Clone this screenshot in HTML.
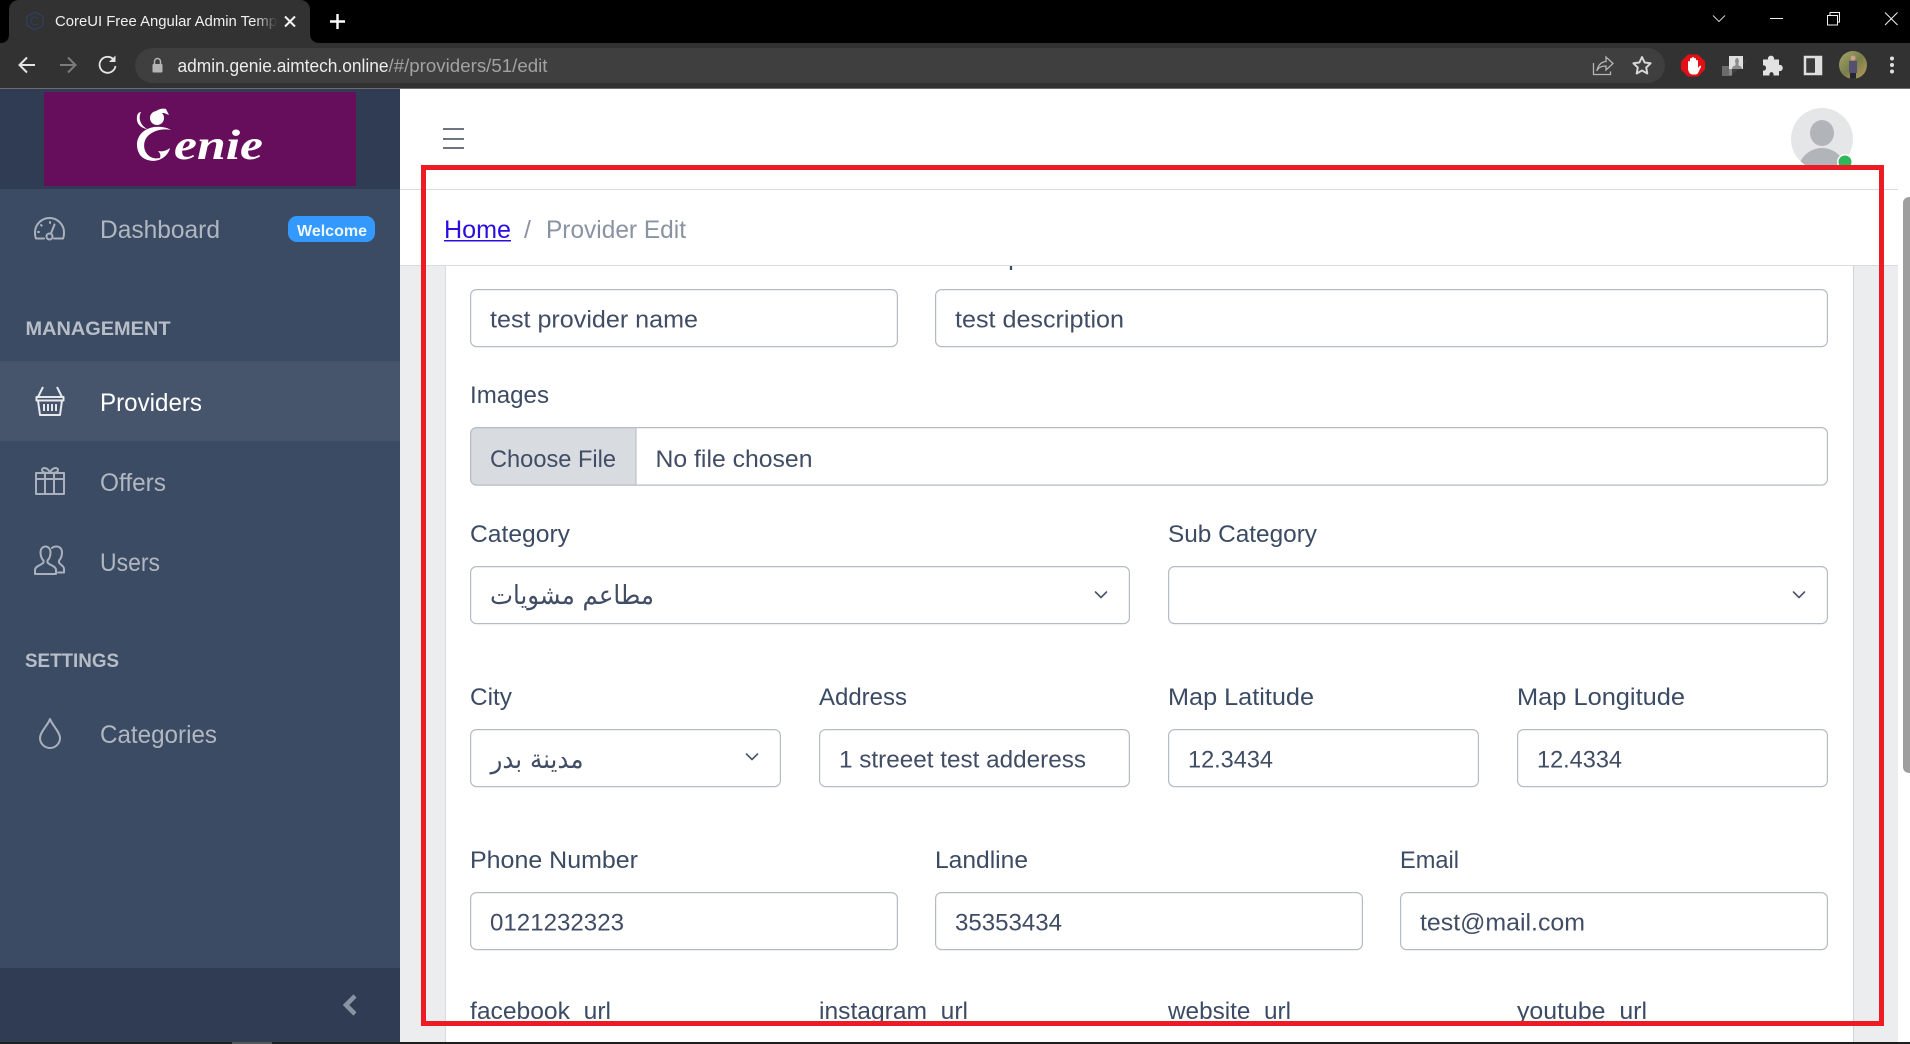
<!DOCTYPE html>
<html><head><meta charset="utf-8"><title>Provider Edit</title>
<style>
html,body{margin:0;padding:0;width:1910px;height:1044px;overflow:hidden;background:#fff}
svg{display:block}
text{font-family:"Liberation Sans",sans-serif;white-space:pre}
.l{font-size:24px;fill:#3c4b64}
.v{font-size:24px;fill:#404d65}
.n{font-size:25px;fill:#b1b7c1}
.h{font-size:19.5px;font-weight:bold;fill:#b8bec8}
.a{font-family:"DejaVu Sans",sans-serif;font-size:26px;fill:#404d65}
.b{fill:#fff;stroke:#b5bac5;stroke-width:1.2}
.i{fill:none;stroke:#aab1bc;stroke-width:2;stroke-linejoin:round;stroke-linecap:round}
.c{fill:none;stroke:#4a566c;stroke-width:1.6;stroke-linecap:round;stroke-linejoin:round}
</style></head><body>
<svg width="1910" height="1044" viewBox="0 0 1910 1044" xmlns="http://www.w3.org/2000/svg">
<defs>
<linearGradient id="fade" x1="0" x2="1"><stop offset="0" stop-color="#323232" stop-opacity="0"/><stop offset="1" stop-color="#323232"/></linearGradient>
<linearGradient id="ava" x1="0" x2="1" y1="0" y2="1"><stop offset="0" stop-color="#a9a56e"/><stop offset=".5" stop-color="#7a7f4c"/><stop offset="1" stop-color="#b89a5c"/></linearGradient>
<clipPath id="av1"><circle cx="1822" cy="139" r="31"/></clipPath>
<clipPath id="av2"><circle cx="1853" cy="65" r="14"/></clipPath>
</defs>

<!-- browser chrome -->
<rect width="1910" height="43" fill="#000"/>
<rect y="43" width="1910" height="45" fill="#323232"/>
<rect y="88" width="1910" height="1" fill="#6e6e6e"/>
<path d="M0 43C6 43 9 40 9 34V10C9 4 13 0 19 0H300C306 0 310 4 310 10V34C310 40 314 43 320 43Z" fill="#323232"/>
<path d="M35 12l8 4.500v9l-8 4.500-8-4.500v-9z" fill="none" stroke="#2f3d55" stroke-width="1.600"/>
<path d="M38 18.500a4 4 0 1 0 0 5" fill="none" stroke="#2f3d55" stroke-width="1.400"/>
<text x="55" y="26" font-size="14.500" fill="#f0f0f0" textLength="222" lengthAdjust="spacingAndGlyphs">CoreUI Free Angular Admin Temp</text>
<rect x="255" y="8" width="22" height="26" fill="url(#fade)"/>
<path d="M285 16.500l10 10M295 16.500l-10 10" stroke="#f2f2f2" stroke-width="2" fill="none"/>
<path d="M337.500 14v15M330 21.500h15" stroke="#fff" stroke-width="2.400" fill="none"/>
<path d="M35 65H20M27 57.500l-7.500 7.500 7.500 7.500" fill="none" stroke="#e4e4e4" stroke-width="2"/>
<path d="M75 65H60M68 57.500l7.500 7.500-7.500 7.500" fill="none" stroke="#7b7b7b" stroke-width="2"/>
<path d="M114 60a8 8 0 1 0 1.500 6" fill="none" stroke="#e4e4e4" stroke-width="1.800"/>
<path d="M115.500 55.500v6.500h-6.500z" fill="#e4e4e4"/>
<rect x="135" y="48" width="1530" height="35" rx="17.500" fill="#3f3f3f"/>
<rect x="152.500" y="64" width="10" height="8.500" rx="1" fill="#b5b5b5"/>
<path d="M154.500 64v-2.500a3 3 0 0 1 6 0V64" fill="none" stroke="#b5b5b5" stroke-width="1.500"/>
<text x="177.500" y="72" font-size="18" fill="#ececec" textLength="211" lengthAdjust="spacingAndGlyphs">admin.genie.aimtech.online</text>
<text x="388.500" y="72" font-size="18" fill="#a2a2a2" textLength="159" lengthAdjust="spacingAndGlyphs">/#/providers/51/edit</text>
<path d="M1593.500 63v11.500h17v-3M1597 71c1-6 4-9 9-9.500V57l7 6.500-7 6.500v-4c-4 0-7 1-9 4z" fill="none" stroke="#b5b5b5" stroke-width="1.300"/>
<path d="M1642 57l2.600 5.500 6 .8-4.400 4.200 1.100 6-5.300-3-5.300 3 1.100-6-4.400-4.200 6-.8z" fill="none" stroke="#d6d6d6" stroke-width="2" stroke-linejoin="round"/>
<path d="M1688 55h10l7 7v8l-7 7h-10l-7-7v-8z" fill="#e40f15" transform="translate(0 -.5)"/>
<path d="M1688 70v-8a1 1 0 0 1 2 0v-3a1 1 0 0 1 2 0v-1a1 1 0 0 1 2 0v1a1 1 0 0 1 2 0v2a1 1 0 0 1 2 0v7l1.500-2c1-1 2 0 1.500 1l-3 6c-.5 1-1.500 1.500-3 1.500h-2.500c-2 0-4-2-4-4z" fill="#fff"/>
<rect x="1722" y="66" width="10" height="10" fill="#6b6b6b"/>
<rect x="1729" y="66" width="3" height="9" fill="#8a8a8a"/>
<path d="M1732 66l8-3 8-4-8 9-8 7z" fill="#3f3f3f"/>
<rect x="1729" y="56" width="14" height="13" fill="#dedede"/>
<path d="M1732 69c0-3 3-3 3.500-4v-2c-1-2 0-5 1.500-5s2.500 3 1.500 5v2c.5 1 3.500 1 3.500 4z" fill="#8d8d8d"/>
<path d="M1764 61h5c-1-5 7-5 6 0h5v5.500c5-1 5 7 0 6V77h-5.500c1-4.500-5-4.500-4 0H1764v-5c4 1 4-6 0-5z" fill="#e2e2e2" transform="translate(-1 -1.500)"/>
<rect x="1805" y="57" width="16" height="17" fill="#3a3a3a" stroke="#dedede" stroke-width="2.500"/>
<rect x="1815" y="56" width="6" height="18" fill="#dedede"/>
<circle cx="1853" cy="65" r="14" fill="url(#ava)"/>
<g clip-path="url(#av2)"><circle cx="1853" cy="58" r="2.500" fill="#caa286"/><rect x="1849" y="61" width="8" height="12" fill="#565070"/><rect x="1850" y="73" width="6" height="7" fill="#26262e"/></g>
<circle cx="1892" cy="58.500" r="2" fill="#e0e0e0"/><circle cx="1892" cy="65" r="2" fill="#e0e0e0"/><circle cx="1892" cy="71.500" r="2" fill="#e0e0e0"/>
<path d="M1713 15.500l6 6 6-6" fill="none" stroke="#cfcfcf" stroke-width="1"/>
<rect x="1770" y="18" width="13" height="1" fill="#f0f0f0"/>
<rect x="1827.500" y="15.500" width="10" height="9.500" fill="none" stroke="#f0f0f0" stroke-width="1"/>
<path d="M1830 15v-2.500h9.500V22H1838" fill="none" stroke="#f0f0f0" stroke-width="1"/>
<path d="M1885 12.500l12.500 12.500M1897.500 12.500L1885 25" stroke="#f0f0f0" stroke-width="1" fill="none"/>

<!-- main area -->
<rect x="400" y="89" width="1510" height="953" fill="#ebedef"/>
<rect x="1898" y="89" width="12" height="953" fill="#fff"/>
<rect x="445" y="189" width="1408" height="853" fill="#fff"/>
<rect x="445" y="189" width="1" height="853" fill="#d8dbe0"/>
<rect x="1853" y="189" width="1" height="853" fill="#d0d3d8"/>

<!-- form -->
<text class="l" x="935" y="265" textLength="129" lengthAdjust="spacingAndGlyphs">Description</text>
<rect class="b" x="470.600" y="289.600" width="426.800" height="57" rx="6"/>
<text class="v" x="490" y="327.500" textLength="208" lengthAdjust="spacingAndGlyphs">test provider name</text>
<rect class="b" x="935.600" y="289.600" width="891.800" height="57" rx="6"/>
<text class="v" x="955" y="327.500" textLength="169" lengthAdjust="spacingAndGlyphs">test description</text>

<text class="l" x="470" y="403" textLength="79" lengthAdjust="spacingAndGlyphs">Images</text>
<path d="M636 427.600H476.600a6 6 0 0 0-6 6V479a6 6 0 0 0 6 6H636z" fill="#d8dbe0"/>
<rect x="470.600" y="427.600" width="1356.800" height="57.500" rx="6" fill="none" stroke="#b5bac5" stroke-width="1.200"/>
<rect x="635.500" y="428" width="1" height="57" fill="#b5bac5"/>
<text class="v" x="490" y="467" textLength="126" lengthAdjust="spacingAndGlyphs">Choose File</text>
<text class="v" x="655.500" y="467" textLength="157" lengthAdjust="spacingAndGlyphs">No file chosen</text>

<text class="l" x="470" y="542" textLength="100" lengthAdjust="spacingAndGlyphs">Category</text>
<text class="l" x="1168" y="542" textLength="149" lengthAdjust="spacingAndGlyphs">Sub Category</text>
<rect class="b" x="470.600" y="566.600" width="658.800" height="57" rx="6"/>
<text class="a" x="490" y="604" textLength="164" lengthAdjust="spacingAndGlyphs">مطاعم مشويات</text>
<path class="c" d="M1095.500 592l5.500 5.500 5.500-5.500"/>
<rect class="b" x="1168.600" y="566.600" width="658.800" height="57" rx="6"/>
<path class="c" d="M1793.500 592l5.500 5.500 5.500-5.500"/>

<text class="l" x="470" y="705" textLength="42" lengthAdjust="spacingAndGlyphs">City</text>
<text class="l" x="819" y="705" textLength="88" lengthAdjust="spacingAndGlyphs">Address</text>
<text class="l" x="1168" y="705" textLength="146" lengthAdjust="spacingAndGlyphs">Map Latitude</text>
<text class="l" x="1517" y="705" textLength="168" lengthAdjust="spacingAndGlyphs">Map Longitude</text>
<rect class="b" x="470.600" y="729.600" width="309.800" height="57" rx="6"/>
<text class="a" x="490.500" y="768" textLength="93" lengthAdjust="spacingAndGlyphs">مدينة بدر</text>
<path class="c" d="M746.500 754l5.500 5.500 5.500-5.500"/>
<rect class="b" x="819.600" y="729.600" width="309.800" height="57" rx="6"/>
<text class="v" x="839" y="767.500" textLength="247" lengthAdjust="spacingAndGlyphs">1 streeet test adderess</text>
<rect class="b" x="1168.600" y="729.600" width="309.800" height="57" rx="6"/>
<text class="v" x="1188" y="767.500" textLength="85" lengthAdjust="spacingAndGlyphs">12.3434</text>
<rect class="b" x="1517.600" y="729.600" width="309.800" height="57" rx="6"/>
<text class="v" x="1537" y="767.500" textLength="85" lengthAdjust="spacingAndGlyphs">12.4334</text>

<text class="l" x="470" y="868" textLength="168" lengthAdjust="spacingAndGlyphs">Phone Number</text>
<text class="l" x="935" y="868" textLength="93" lengthAdjust="spacingAndGlyphs">Landline</text>
<text class="l" x="1400" y="868" textLength="59" lengthAdjust="spacingAndGlyphs">Email</text>
<rect class="b" x="470.600" y="892.600" width="426.800" height="57" rx="6"/>
<text class="v" x="490" y="930.500" textLength="134" lengthAdjust="spacingAndGlyphs">0121232323</text>
<rect class="b" x="935.600" y="892.600" width="426.800" height="57" rx="6"/>
<text class="v" x="955" y="930.500" textLength="107" lengthAdjust="spacingAndGlyphs">35353434</text>
<rect class="b" x="1400.600" y="892.600" width="426.800" height="57" rx="6"/>
<text class="v" x="1420" y="930.500" textLength="165" lengthAdjust="spacingAndGlyphs">test@mail.com</text>

<text class="l" x="470" y="1019" textLength="141" lengthAdjust="spacingAndGlyphs">facebook_url</text>
<text class="l" x="819" y="1019" textLength="149" lengthAdjust="spacingAndGlyphs">instagram_url</text>
<text class="l" x="1168" y="1019" textLength="123" lengthAdjust="spacingAndGlyphs">website_url</text>
<text class="l" x="1517" y="1019" textLength="130" lengthAdjust="spacingAndGlyphs">youtube_url</text>

<!-- header + breadcrumb -->
<rect x="400" y="89" width="1498" height="100" fill="#fff"/>
<rect x="400" y="189" width="1498" height="1" fill="#d8dbe0"/>
<rect x="400" y="190" width="1498" height="75" fill="#fff"/>
<rect x="400" y="265" width="1498" height="1" fill="#d8dbe0"/>
<rect x="443" y="128" width="21" height="2" fill="#6d7585"/>
<rect x="443" y="138" width="21" height="2" fill="#6d7585"/>
<rect x="443" y="147" width="21" height="2" fill="#6d7585"/>
<circle cx="1822" cy="139" r="31" fill="#e4e6e8"/>
<g clip-path="url(#av1)"><ellipse cx="1822" cy="133" rx="12" ry="13" fill="#b1b5b9"/><ellipse cx="1822" cy="172" rx="24" ry="24" fill="#b1b5b9"/></g>
<circle cx="1845" cy="162" r="8" fill="#fff"/>
<circle cx="1845" cy="162" r="6.500" fill="#2eb85c"/>
<text x="444" y="238" font-size="25" fill="#2a0ee0" textLength="67" lengthAdjust="spacingAndGlyphs">Home</text>
<rect x="444" y="240" width="67" height="1.500" fill="#2a0ee0"/>
<text x="524" y="238" font-size="25" fill="#8a93a2">/</text>
<text x="546" y="238" font-size="25" fill="#8a93a2" textLength="140" lengthAdjust="spacingAndGlyphs">Provider Edit</text>

<!-- scrollbar -->
<path d="M1903 203a6 6 0 0 1 6-6h1v576h-1a6 6 0 0 1-6-6z" fill="#9e9e9e"/>

<!-- sidebar -->
<rect x="0" y="189" width="400" height="853" fill="#3c4b64"/>
<rect x="0" y="89" width="400" height="100" fill="#303c54"/>
<rect x="0" y="968" width="400" height="74" fill="#303c54"/>
<rect x="44" y="92" width="312" height="94" fill="#660e5c"/>
<!-- logo -->
<circle cx="157" cy="118" r="7" fill="#fff"/>
<path d="M141 112c-3 6-1 13 6 17-7-1-11-6-10-12 0-3 2-5 4-5z" fill="#fff"/>
<path d="M156 111c3-2 7-3 10-2l3 6-5-2c-3 0-6 0-8-2z" fill="#fff"/>
<path d="M171 130c-6-4-19-5-27 1-8 6-9 16-4 24 4 5 13 8 21 4 4-2 8-6 9-11-4 3-8 4-12 3 2 2 3 4 2 7-5 1-9 0-12-3-5-5-5-13-1-18 5-6 15-9 24-7z" fill="#fff"/>
<text x="174" y="159" font-size="42" font-style="italic" font-weight="bold" fill="#fff" textLength="89" lengthAdjust="spacingAndGlyphs" style="font-family:'Liberation Serif',serif">enie</text>

<!-- nav -->
<rect x="0" y="361" width="400" height="80" fill="#46546c"/>
<path class="i" d="M36 238.500c-1-2-1-4-1-6a14.500 14.500 0 0 1 29 0c0 2 0 4-1 6h-9M36 238.500h8"/>
<circle class="i" cx="49.500" cy="236.500" r="3"/>
<path class="i" d="M51 233.500l3.500-9M50 222v1M41 225l.7.7M38 232h1"/>
<text class="n" x="100" y="238" textLength="120" lengthAdjust="spacingAndGlyphs">Dashboard</text>
<rect x="288" y="216" width="87" height="26" rx="9" fill="#39f"/>
<text x="297" y="236" font-size="16" font-weight="bold" fill="#eef6ff" textLength="70" lengthAdjust="spacingAndGlyphs">Welcome</text>

<text class="h" x="25.500" y="335" textLength="145" lengthAdjust="spacingAndGlyphs">MANAGEMENT</text>
<path d="M36.500 397h27v3.500h-27zM38 400.500l2 14.500h20l2-14.500M43 387l-5 10M57 387l5 10M44 404v7M48 404v7M52 404v7M56 404v7" fill="none" stroke="#e6e8ec" stroke-width="2" stroke-linejoin="round"/>
<text x="100" y="411" font-size="25" fill="#fff" textLength="102" lengthAdjust="spacingAndGlyphs">Providers</text>

<path class="i" d="M36 473h28v6H36zM36 479h28v15H36zM45 473v21M54 473v21M50 473c-2-6-8-6-8-3 0 2 3 3 8 3zM50 473c2-6 8-6 8-3 0 2-3 3-8 3z" stroke-width="1.800"/>
<text class="n" x="100" y="491" textLength="66" lengthAdjust="spacingAndGlyphs">Offers</text>

<path class="i" d="M35 574v-4c0-4 7-5 8.500-7.500v-2c-2-2-3-4-3-8 0-4 2.500-6 5-6s5 2 5 6c0 4-1 6-3 8v2c1.500 2.500 8.500 3.500 8.500 7.500v4z" stroke-width="1.800"/>
<path class="i" d="M52 548c1-1 3-1.500 4.500-1.500 3 0 5.500 2 5.500 6 0 4-1 6-3 8v2c1 2.500 5 3 5 6.500v3.500h-6" stroke-width="1.800"/>
<text class="n" x="100" y="571" textLength="60" lengthAdjust="spacingAndGlyphs">Users</text>

<text class="h" x="25" y="667" textLength="94" lengthAdjust="spacingAndGlyphs">SETTINGS</text>
<path class="i" d="M50 719c-2 6-10 13-10 19a10 10 0 0 0 20 0c0-6-8-13-10-19z"/>
<text class="n" x="100" y="743" textLength="117" lengthAdjust="spacingAndGlyphs">Categories</text>

<path d="M355 996l-9 9 9 9" fill="none" stroke="#8a93a2" stroke-width="4.500"/>

<!-- bottom strip -->
<rect y="1042" width="1910" height="2" fill="#1e1e1e"/>
<rect x="232" y="1042" width="40" height="2" fill="#555"/>

<!-- red annotation frame -->
<rect x="423.500" y="167.500" width="1458" height="856" fill="none" stroke="#ed1c24" stroke-width="5"/>
</svg>
</body></html>
